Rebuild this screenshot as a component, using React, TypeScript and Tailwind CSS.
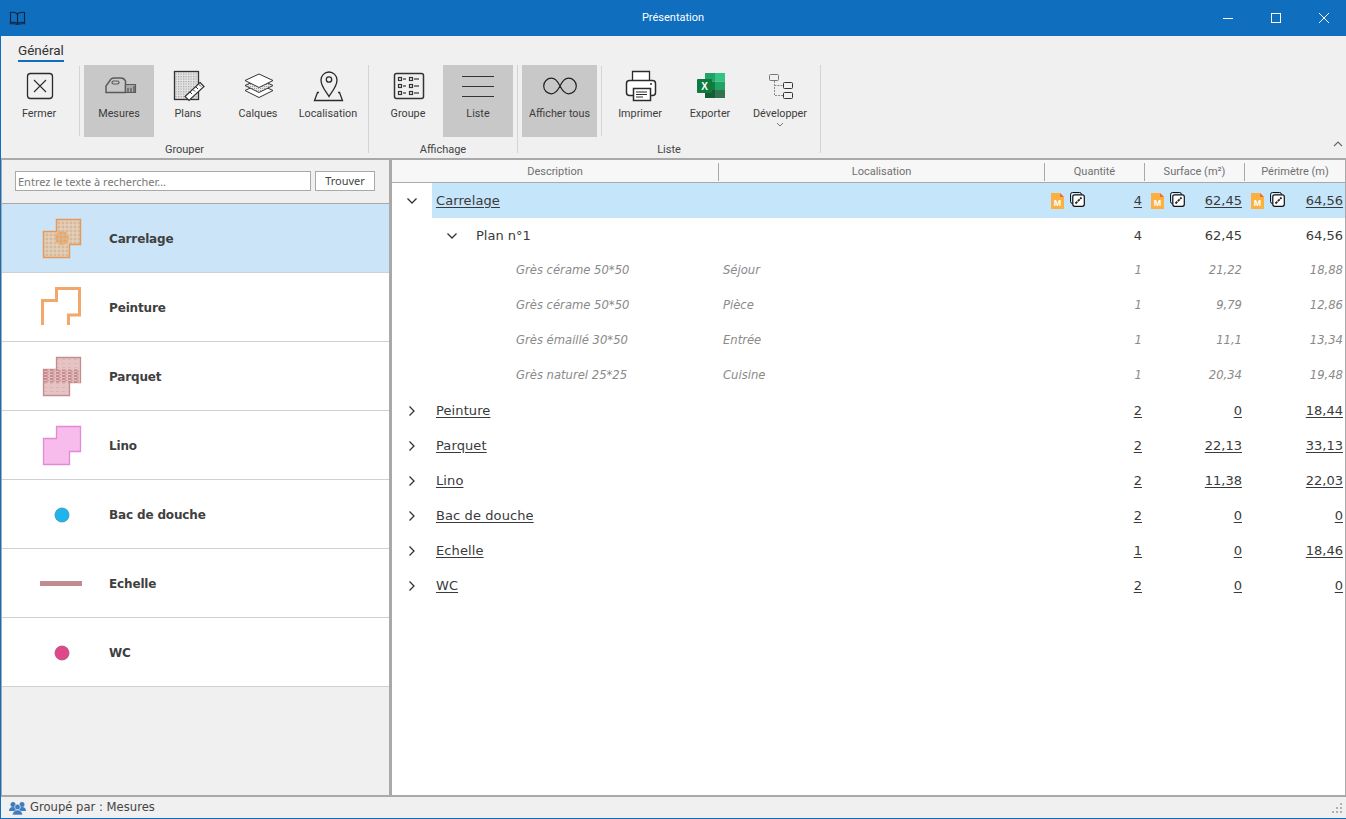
import type { ReactNode } from "react";

const uiFont = "font-['Roboto',sans-serif]";
const fieldFont = "font-['Noto_Sans',sans-serif]";
const listFont = "font-['DejaVu_Sans',sans-serif]";

function Ico({ children }: { children: ReactNode }) {
  return (
    <svg width="40" height="40" viewBox="0 0 40 40" fill="none" className="shrink-0">
      {children}
    </svg>
  );
}

const icons: Record<string, ReactNode> = {
  Fermer: (
    <Ico>
      <rect x="8.500" y="7.500" width="25" height="25" rx="3" stroke="#2b2b2b" strokeWidth="1.300" />
      <path d="M15 14l12 12M27 14L15 26" stroke="#2b2b2b" strokeWidth="1.100" />
    </Ico>
  ),
  Mesures: (
    <Ico>
      <path d="M7 26.500v-6.500l5-7c1-.8 2-1 3-1h7c2 0 3.500 1 4.500 3v11.500z" stroke="#5a5a5a" strokeWidth="1.500" />
      <rect x="13" y="15" width="7" height="3" rx="1.500" stroke="#5a5a5a" strokeWidth="1.200" />
      <path d="M26.500 18.500h10v8h-10z" fill="#a8a8a8" stroke="#5a5a5a" strokeWidth="1.200" />
      <path d="M29 26v-4M32 26v-4M35 26v-6" stroke="#444" strokeWidth="1" />
    </Ico>
  ),
  Plans: (
    <Ico>
      <defs>
        <pattern id="sheet" width="2.500" height="2.500" patternUnits="userSpaceOnUse">
          <rect width="2.500" height="2.500" fill="#e4e4e4" />
          <rect width="1.200" height="1.200" fill="#a2a2a2" />
        </pattern>
      </defs>
      <rect x="6.500" y="5.500" width="24" height="28" fill="url(#sheet)" stroke="#333" strokeWidth="1.300" />
      <path d="M32 16.500l4 4-15 14-4-4z" fill="#fff" stroke="#333" strokeWidth="1.200" />
      <path d="M22 26l2 2M25 23.500l2 2M28 21l2 2M31 18.500l2 2" stroke="#333" strokeWidth="1" />
    </Ico>
  ),
  Calques: (
    <Ico>
      <defs>
        <pattern id="layer" width="2" height="2" patternUnits="userSpaceOnUse">
          <rect width="2" height="2" fill="#e8e8e8" />
          <rect width="1" height="1" fill="#a0a0a0" />
        </pattern>
      </defs>
      <path d="M21 18l14 6.500-14 7-14-7z" fill="#fff" stroke="#333" strokeWidth="1" />
      <path d="M21 13l14 6.500-14 7-14-7z" fill="url(#layer)" stroke="#333" strokeWidth="1" />
      <path d="M21 8l14 6.500-14 7-14-7z" fill="#fff" stroke="#333" strokeWidth="1" />
    </Ico>
  ),
  Localisation: (
    <Ico>
      <path d="M11 26.500H9.500L6.500 34.500h28L31.500 26.500H30" stroke="#2b2b2b" strokeWidth="1.300" />
      <path d="M21 30.500c-2-4-8-9.500-8-16.500a8 8 0 0 1 16 0c0 7-6 12.500-8 16.500z" fill="#f0f0f0" stroke="#2b2b2b" strokeWidth="1.300" />
      <circle cx="21" cy="13.500" r="2.700" stroke="#2b2b2b" strokeWidth="1.300" />
    </Ico>
  ),
  Groupe: (
    <Ico>
      <rect x="6.500" y="7.500" width="29" height="25" rx="2" stroke="#333" strokeWidth="1.500" />
      {[13, 20, 27].map((y) => (
        <g key={y} stroke="#333">
          <rect x="10.500" y={y - 1.500} width="3" height="3" strokeWidth="1.200" />
          <path d={`M15 ${y}h3`} strokeWidth="1.200" />
          <rect x="21.500" y={y - 1.500} width="3" height="3" strokeWidth="1.200" />
          <path d={`M26 ${y}h5`} strokeWidth="1.200" />
        </g>
      ))}
    </Ico>
  ),
  Liste: (
    <Ico>
      <path d="M4 10.500h32M4 20.500h32M4 30.500h32" stroke="#333" strokeWidth="1.200" />
    </Ico>
  ),
  "Afficher tous": (
    <Ico>
      <path
        d="M20 20c-2-4-5-7.800-8.500-7.800a7.800 7.800 0 0 0 0 15.600c3.500 0 6.500-3.800 8.500-7.800s5-7.800 8.500-7.800a7.800 7.800 0 0 1 0 15.600c-3.500 0-6.500-3.800-8.500-7.800z"
        stroke="#222"
        strokeWidth="1.200"
      />
    </Ico>
  ),
  Imprimer: (
    <Ico>
      <path d="M12.500 14V5.500h17V14" fill="#fff" stroke="#2b2b2b" strokeWidth="1.300" />
      <rect x="6.500" y="14.500" width="29" height="15" rx="3" fill="#fff" stroke="#2b2b2b" strokeWidth="1.500" />
      <rect x="13.500" y="22.500" width="17" height="12" fill="#fff" stroke="#2b2b2b" strokeWidth="1.500" />
      <path d="M16 26h11M16 28.500h11M16 31h7" stroke="#2b2b2b" strokeWidth="1" />
      <circle cx="31" cy="18" r="1" fill="#2b2b2b" />
    </Ico>
  ),
  Exporter: (
    <Ico>
      <rect x="15" y="7" width="10" height="8.500" fill="#21a366" />
      <rect x="25" y="7" width="10" height="8.500" fill="#33c481" />
      <rect x="15" y="15.500" width="10" height="8.500" fill="#107c41" />
      <rect x="25" y="15.500" width="10" height="8.500" fill="#21a366" />
      <rect x="15" y="24" width="10" height="8" fill="#185c37" />
      <rect x="25" y="24" width="10" height="8" fill="#33744f" />
      <rect x="7" y="13" width="15" height="14" rx="1" fill="#0f7a3f" />
      <text x="14.500" y="24" textAnchor="middle" fontSize="10" fontWeight="700" fill="#fff" fontFamily="Liberation Sans, sans-serif">
        X
      </text>
    </Ico>
  ),
  Développer: (
    <Ico>
      <path d="M14.500 15v14.500H23M14.500 19.500H23" stroke="#8a8a8a" strokeWidth="1" strokeDasharray="2 1" />
      <rect x="9.500" y="8.500" width="9" height="6" rx="1" stroke="#777" strokeWidth="1" />
      <rect x="23.500" y="16.500" width="9" height="6" rx="1" stroke="#333" strokeWidth="1" />
      <rect x="23.500" y="26.500" width="9" height="6" rx="1" stroke="#333" strokeWidth="1" />
    </Ico>
  ),
};

function RibbonButton({ label, w = "w-[70px]", active, caret }: { label: string; w?: string; active?: boolean; caret?: boolean }) {
  return (
    <div className={`${w} h-[72px] shrink-0 pt-px flex flex-col items-center ${active ? "bg-[#c8c8c8]" : ""}`}>
      {icons[label]}
      <span className="mt-px text-[10.800px] leading-[14px] text-[#3c3c3c] whitespace-nowrap">{label}</span>
      {caret && (
        <svg width="8" height="5" viewBox="0 0 8 5" className="mt-px">
          <path d="M1 1l3 3 3-3" fill="none" stroke="#777" strokeWidth="1" />
        </svg>
      )}
    </div>
  );
}

function RibbonGroup({ label, w, children }: { label: string; w: string; children: ReactNode }) {
  return (
    <div className={`${w} shrink-0 h-[88px] flex flex-col border-r border-[#d4d4d4]`}>
      <div className="flex pl-[4px] h-[72px] shrink-0 items-start">{children}</div>
      <div className="text-center text-[11px] leading-[14px] pt-[6px] text-[#444]">{label}</div>
    </div>
  );
}

function Ribbon() {
  return (
    <div className={`h-[122px] shrink-0 bg-[#f0f0f0] flex flex-col ${uiFont}`}>
      <div className="h-[29px] pl-[17px] pt-[5px] shrink-0">
        <span className="block w-fit text-[13.500px] leading-[18px] h-[21px] text-[#333] border-b-2 border-[#0f6ebe]">Général</span>
      </div>
      <div className="flex-1 flex">
        <RibbonGroup label="Grouper" w="w-[368px]">
          <div className="flex -ml-px">
            <RibbonButton label="Fermer" />
            <div className="w-px h-[70px] ml-[5px] mr-[4px] mt-px bg-[#d4d4d4] shrink-0" />
            <RibbonButton label="Mesures" active />
            <div className="-ml-px flex">
              <RibbonButton label="Plans" />
              <RibbonButton label="Calques" />
              <RibbonButton label="Localisation" />
            </div>
          </div>
        </RibbonGroup>
        <RibbonGroup label="Affichage" w="w-[149px]">
          <RibbonButton label="Groupe" />
          <RibbonButton label="Liste" active />
        </RibbonGroup>
        <RibbonGroup label="Liste" w="w-[303px]">
          <RibbonButton label="Afficher tous" w="w-[75px]" active />
          <div className="w-px h-[70px] mx-[4px] mt-px bg-[#d4d4d4] shrink-0" />
          <div className="flex -ml-[1px]">
            <RibbonButton label="Imprimer" />
            <RibbonButton label="Exporter" />
            <RibbonButton label="Développer" caret />
          </div>
        </RibbonGroup>
        <div className="flex-1 flex justify-end items-end pr-[3px] pb-[11px]">
          <svg width="10" height="6" viewBox="0 0 10 6">
            <path d="M1 5l4-4 4 4" fill="none" stroke="#666" strokeWidth="1.100" />
          </svg>
        </div>
      </div>
    </div>
  );
}

const stair = "M24.500 15.500H48.500V40.500H37.500V53.500H11.500V27.500H24.500Z";

function Swatch({ name }: { name: string }) {
  if (name === "Carrelage")
    return (
      <svg width="60" height="69" viewBox="0 0 60 69" className="shrink-0">
        <defs>
          <pattern id="tile" x="0.500" y="0.500" width="4" height="4" patternUnits="userSpaceOnUse">
            <rect width="4" height="4" fill="#d6b99d" />
            <path d="M0 .5h4M.5 0v4" stroke="#e8d6c2" strokeWidth="1" />
          </pattern>
          <pattern id="tileHot" x="0.500" y="0.500" width="4" height="4" patternUnits="userSpaceOnUse">
            <path d="M0 .5h4M.5 0v4" stroke="#ee8a2c" strokeWidth="1" />
          </pattern>
        </defs>
        <path d={stair} fill="url(#tile)" stroke="#e39a5f" strokeWidth="1.500" />
        <circle cx="30" cy="34" r="7" fill="url(#tileHot)" opacity="0.8" />
      </svg>
    );
  if (name === "Peinture")
    return (
      <svg width="60" height="69" viewBox="0 0 60 69" className="shrink-0">
        <path d="M10.500 52V27.500H24.500V15.500H47.500V42H36.500V52" fill="none" stroke="#f2a76b" strokeWidth="3" />
      </svg>
    );
  if (name === "Parquet")
    return (
      <svg width="60" height="69" viewBox="0 0 60 69" className="shrink-0">
        <defs>
          <pattern id="wood" width="6" height="3" patternUnits="userSpaceOnUse">
            <rect width="6" height="3" fill="#e3bcbc" />
            <path d="M0 1h3.500" stroke="#a85a62" strokeWidth="1" />
            <path d="M3 2.500h2" stroke="#cf9a9c" strokeWidth="1" />
          </pattern>
          <pattern id="woodLight" width="6" height="4" patternUnits="userSpaceOnUse">
            <rect width="6" height="4" fill="#e6c4c4" />
            <path d="M0 1.500h3" stroke="#dcb4b6" strokeWidth="1" />
          </pattern>
        </defs>
        <path d={stair} fill="url(#woodLight)" stroke="#c58b8f" strokeWidth="1.300" />
        <path d="M12 27.500H48V40.500H12Z" fill="url(#wood)" />
      </svg>
    );
  if (name === "Lino")
    return (
      <svg width="60" height="69" viewBox="0 0 60 69" className="shrink-0">
        <path d={stair} fill="#f7bcec" stroke="#e489d8" strokeWidth="1.300" />
      </svg>
    );
  if (name === "Bac de douche")
    return (
      <svg width="60" height="69" viewBox="0 0 60 69" className="shrink-0">
        <circle cx="30" cy="35" r="7" fill="#1eb4ee" stroke="#3a8bb3" strokeWidth="0.800" />
      </svg>
    );
  if (name === "Echelle")
    return (
      <svg width="60" height="69" viewBox="0 0 60 69" className="shrink-0">
        <rect x="8" y="32" width="42" height="5" fill="#c08c90" />
      </svg>
    );
  return (
    <svg width="60" height="69" viewBox="0 0 60 69" className="shrink-0">
      <circle cx="30" cy="35" r="7" fill="#e0488a" stroke="#a54e76" strokeWidth="0.800" />
    </svg>
  );
}

const measures = ["Carrelage", "Peinture", "Parquet", "Lino", "Bac de douche", "Echelle", "WC"];

function LeftPanel() {
  return (
    <div className="w-[391px] shrink-0 flex flex-col bg-[#f0f0f0] border-l border-r-[3px] border-l-[#a9a9a9] border-r-[#a9a9a9]">
      <div className={`h-[44px] shrink-0 flex items-start pt-[11px] pl-[13px] gap-[4px] border-b border-[#a9a9a9] ${fieldFont}`}>
        <input
          readOnly
          placeholder="Entrez le texte à rechercher…"
          className="w-[296px] h-[20px] px-[2px] bg-white border border-[#a9a9a9] text-[11px] outline-none placeholder:text-[#777]"
        />
        <div className="w-[60px] h-[20px] bg-white border border-[#a9a9a9] text-[11px] leading-[18px] text-center text-[#444]">Trouver</div>
      </div>
      {measures.map((m, i) => (
        <div key={m} className={`h-[69px] shrink-0 flex items-center pl-[30px] border-b border-[#d0d0d0] ${i === 0 ? "bg-[#cce4f7]" : "bg-white"}`}>
          <Swatch name={m} />
          <span className={`ml-[17px] pt-[2px] text-[12px] tracking-[-0.15px] font-bold text-[#3f3f3f] ${listFont}`}>{m}</span>
        </div>
      ))}
    </div>
  );
}

function Chevron({ open }: { open?: boolean }) {
  return (
    <svg width="12" height="12" viewBox="0 0 12 12" className="shrink-0">
      <path d={open ? "M1.500 3.500L6 8l4.500-4.500" : "M3.500 1.500L8 6l-4.500 4.500"} fill="none" stroke="#333" strokeWidth="1.300" />
    </svg>
  );
}

function FileM() {
  return (
    <svg width="13" height="16" viewBox="0 0 13 16" className="shrink-0">
      <path d="M0 0h9l4 4v12H0z" fill="#fbb040" />
      <path d="M9 0l4 4H9z" fill="#f26a3c" />
      <text x="6.500" y="12.500" textAnchor="middle" fontSize="9" fontWeight="700" fill="#fff" fontFamily="Liberation Sans, sans-serif">
        M
      </text>
    </svg>
  );
}

function LinkBox() {
  return (
    <svg width="15" height="15" viewBox="0 0 15 15" className="shrink-0 -mt-[2px]">
      <rect x="0.500" y="0.500" width="11" height="11" rx="2" fill="none" stroke="#111" strokeWidth="1" />
      <rect x="2.800" y="2.800" width="11.500" height="11.500" rx="2" fill="#fff" stroke="#111" strokeWidth="1.200" />
      <path d="M5.500 11.500L11.500 5.500" stroke="#222" strokeWidth="1.800" strokeDasharray="2.600 0.700" />
    </svg>
  );
}

function Num({ v, link, marks, last }: { v: string; link?: boolean; marks?: boolean; last?: boolean }) {
  return (
    <div className={`${last ? "w-[101px]" : "w-[100px]"} shrink-0 flex items-center pl-[7px] pr-[2px]`}>
      {marks && (
        <div className="flex items-center gap-[6px]">
          <FileM />
          <LinkBox />
        </div>
      )}
      <span className={`ml-auto tracking-normal ${link ? "underline underline-offset-2" : ""}`}>{v}</span>
    </div>
  );
}

const details = [
  ["Grès cérame 50*50", "Séjour", "1", "21,22", "18,88"],
  ["Grès cérame 50*50", "Pièce", "1", "9,79", "12,86"],
  ["Grès émaillé 30*50", "Entrée", "1", "11,1", "13,34"],
  ["Grès naturel 25*25", "Cuisine", "1", "20,34", "19,48"],
];

const closedRows = [
  ["Peinture", "2", "0", "18,44"],
  ["Parquet", "2", "22,13", "33,13"],
  ["Lino", "2", "11,38", "22,03"],
  ["Bac de douche", "2", "0", "0"],
  ["Echelle", "1", "0", "18,46"],
  ["WC", "2", "0", "0"],
];

function RightPanel() {
  return (
    <div className={`flex-1 min-w-0 flex flex-col bg-white border-r border-[#a9a9a9] ${listFont} text-[13px] tracking-[0.1px] text-[#3a3a3a]`}>
      <div className={`h-[23px] pt-px shrink-0 flex items-center bg-[#f7f7f7] border-b border-[#a9a9a9] text-[11px] tracking-normal text-[#707070] ${uiFont}`}>
        <div className="w-[327px] text-center border-r border-[#a9a9a9] leading-[18px]">Description</div>
        <div className="w-[326px] text-center border-r border-[#a9a9a9] leading-[18px]">Localisation</div>
        <div className="w-[100px] text-center border-r border-[#a9a9a9] leading-[18px]">Quantité</div>
        <div className="w-[100px] text-center border-r border-[#a9a9a9] leading-[18px]">Surface (m²)</div>
        <div className="flex-1 text-center leading-[18px]">Périmètre (m)</div>
      </div>

      <div className="h-[35px] flex items-center">
        <div className="w-[40px] pl-[14px] shrink-0">
          <Chevron open />
        </div>
        <div className="flex-1 h-full flex items-center bg-[#c5e6fa]">
          <div className="w-[612px] pl-[4px] underline underline-offset-2">Carrelage</div>
          <Num v="4" link marks />
          <Num v="62,45" link marks />
          <Num v="64,56" link marks last />
        </div>
      </div>

      <div className="h-[35px] flex items-center">
        <div className="w-[652px] flex items-center pl-[54px] shrink-0">
          <Chevron open />
          <span className="ml-[18px] tracking-normal">Plan n°1</span>
        </div>
        <Num v="4" />
        <Num v="62,45" />
        <Num v="64,56" last />
      </div>

      {details.map((d, i) => (
        <div key={i} className="h-[35px] pt-[1px] flex items-center italic text-[11.600px] tracking-normal text-[#8a8a8a]">
          <div className="w-[331px] pl-[124px] shrink-0">{d[0]}</div>
          <div className="w-[321px] shrink-0">{d[1]}</div>
          <Num v={d[2]} />
          <Num v={d[3]} />
          <Num v={d[4]} last />
        </div>
      ))}

      {closedRows.map((r) => (
        <div key={r[0]} className="h-[35px] flex items-center">
          <div className="w-[652px] flex items-center pl-[14px] shrink-0">
            <Chevron />
            <span className="ml-[18px] underline underline-offset-2">{r[0]}</span>
          </div>
          <Num v={r[1]} link />
          <Num v={r[2]} link />
          <Num v={r[3]} link last />
        </div>
      ))}
    </div>
  );
}

export default function App() {
  return (
    <div className="w-full h-screen overflow-hidden flex flex-col bg-[#f0f0f0] border-b border-l border-[#0f6ebe]">
      {/* Title bar */}
      <div className={`-ml-px h-[36px] shrink-0 bg-[#0f6ebe] flex items-center ${uiFont}`}>
        <div className="w-[142px] pl-[9px] flex">
          <svg width="17" height="14" viewBox="0 0 17 14">
            <path d="M8.500 3C7 1.500 4 1 1.500 1.500V11.500C4 11 7 11.500 8.500 12.500 10 11.500 13 11 15.500 11.500V1.500C13 1 10 1.500 8.500 3ZM8.500 3V12.500" fill="none" stroke="#10233a" strokeWidth="1.100" />
            <path d="M.5 12.800c3-.3 6 0 8 .7 2-.7 5-1 8-.7" fill="none" stroke="#10233a" strokeWidth="1" />
          </svg>
        </div>
        <div className="flex-1 pt-px text-center text-[11px] text-white">Présentation</div>
        <div className="w-[142px] flex h-full">
          <div className="w-[48px] flex items-center justify-center">
            <svg width="10" height="10" viewBox="0 0 10 10"><path d="M0 5.500h10" stroke="#fff" strokeWidth="1" /></svg>
          </div>
          <div className="w-[48px] flex items-center justify-center">
            <svg width="10" height="10" viewBox="0 0 10 10"><rect x="0.500" y="0.500" width="9" height="9" fill="none" stroke="#fff" strokeWidth="1" /></svg>
          </div>
          <div className="w-[46px] pl-[2px] flex items-center justify-center">
            <svg width="10" height="10" viewBox="0 0 10 10"><path d="M0 0l10 10M10 0L0 10" stroke="#fff" strokeWidth="1" /></svg>
          </div>
        </div>
      </div>

      <Ribbon />

      {/* Body */}
      <div className="flex-1 min-h-0 flex border-t-2 border-b-2 border-[#a9a9a9]">
        <LeftPanel />
        <RightPanel />
      </div>

      {/* Status bar */}
      <div className={`h-[21px] pt-px shrink-0 flex items-center pl-[8px] pr-[4px] text-[11.600px] text-[#444] ${listFont}`}>
        <svg width="17" height="14" viewBox="0 0 17 14" className="shrink-0">
          <g fill="#3d7cc0">
            <circle cx="4" cy="3.500" r="2.500" />
            <circle cx="13" cy="3.500" r="2.500" />
            <path d="M0 10c0-2.500 1.500-4 4-4s4 1.500 4 4z" />
            <path d="M9 10c0-2.500 1.500-4 4-4s4 1.500 4 4z" />
            <circle cx="8.500" cy="6" r="2.800" stroke="#f0f0f0" strokeWidth="0.600" />
            <path d="M3.500 14c0-3 2-5 5-5s5 2 5 5z" stroke="#f0f0f0" strokeWidth="0.600" />
          </g>
        </svg>
        <span className="ml-[4px]">Groupé par : Mesures</span>
        <svg width="10" height="10" viewBox="0 0 10 10" className="ml-auto shrink-0">
          <g fill="#b0b0b0">
            <rect x="8" y="0" width="2" height="2" />
            <rect x="4" y="4" width="2" height="2" />
            <rect x="8" y="4" width="2" height="2" />
            <rect x="0" y="8" width="2" height="2" />
            <rect x="4" y="8" width="2" height="2" />
            <rect x="8" y="8" width="2" height="2" />
          </g>
        </svg>
      </div>
    </div>
  );
}
